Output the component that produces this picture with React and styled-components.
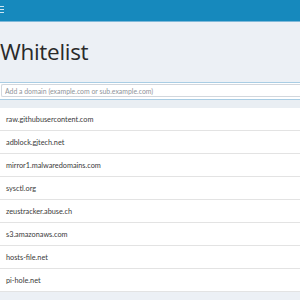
import React from "react";
import styled, { createGlobalStyle } from "styled-components";

const Global = createGlobalStyle`
  html, body { margin: 0; padding: 0; background: #ecf0f5; overflow: hidden; }
  body { font-family: "Lato", "Open Sans", sans-serif; color: #333; }
`;

const Header = styled.header`
  height: 21px;
  background: #1689bd;
  border-bottom: 1px solid #7fb8d8;
  display: flex;
  align-items: center;
`;

const Burger = styled.div`
  width: 4px;
  display: flex;
  flex-direction: column;
  gap: 2px;
  margin-top: -2px;
  span { display: block; height: 1px; background: #cfe6f2; }
`;

const Title = styled.h1`
  margin: 0;
  padding: 17px 0 0 0;
  height: 43px;
  box-sizing: border-box;
  font-family: "Open Sans", "Lato", sans-serif;
  font-weight: 400;
  font-size: 22.5px;
  line-height: 26px;
  color: #2a2a2a;
  letter-spacing: -0.3px;
`;

const Spacer = styled.div`
  height: 17px;
`;

const InputBox = styled.div`
  border-top: 1px solid #a9cde4;
  background: #fff;
  padding: 1px 0 2px 1px;
`;

const Input = styled.input`
  display: block;
  width: 100%;
  box-sizing: border-box;
  height: 13px;
  border: 1px solid #d2d7dd;
  border-right: none;
  border-radius: 2px 0 0 2px;
  padding: 0 3px;
  font-family: "Lato", sans-serif;
  font-size: 6.9px;
  outline: none;
  &::placeholder { color: #8f949a; }
`;

const ListBox = styled.div`
  border-top: 1px solid #a9cde4;
  padding-top: 8px;
  background: #e9eef3;
`;

const List = styled.ul`
  list-style: none;
  margin: 0;
  padding: 0;
`;

const Item = styled.li`
  height: 22px;
  background: #fff;
  border-bottom: 1px solid #e3e3e3;
  display: flex;
  align-items: center;
  padding-left: 6px;
  font-size: 7.3px;
  color: #3a3a3a;
`;

const domains = [
  "raw.githubusercontent.com",
  "adblock.gjtech.net",
  "mirror1.malwaredomains.com",
  "sysctl.org",
  "zeustracker.abuse.ch",
  "s3.amazonaws.com",
  "hosts-file.net",
  "pi-hole.net",
];

export default function App() {
  return (
    <>
      <Global />
      <Header>
        <Burger><span /><span /><span /></Burger>
      </Header>
      <Title>Whitelist</Title>
      <Spacer />
      <InputBox>
        <Input placeholder="Add a domain (example.com or sub.example.com)" />
      </InputBox>
      <ListBox>
        <List>
          {domains.map((d) => (
            <Item key={d}>{d}</Item>
          ))}
        </List>
      </ListBox>
    </>
  );
}
